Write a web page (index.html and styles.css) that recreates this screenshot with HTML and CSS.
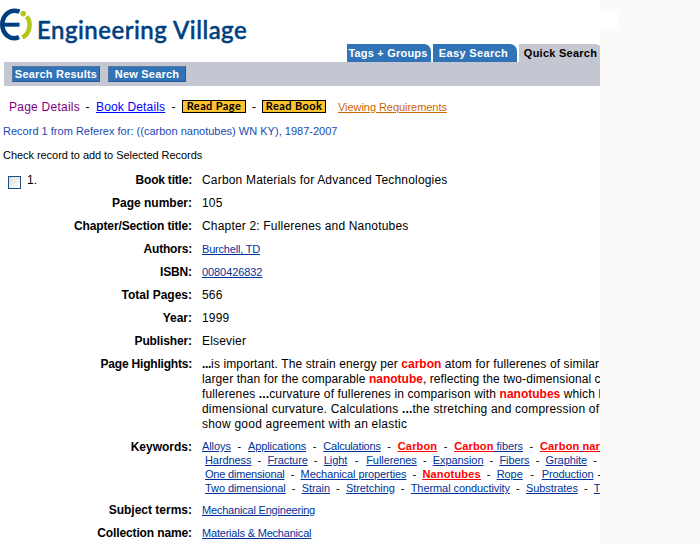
FILE: index.html
```html
<!DOCTYPE html>
<html lang="en">
<head>
<meta charset="utf-8">
<title>Engineering Village</title>
<link rel="stylesheet" href="styles.css">
</head>
<body>
<main class="page">
  <header class="header">
    <div class="brand">
      <svg class="mark" width="33" height="44" viewBox="0 0 33 44">
        <g fill="none">
          <path d="M19.500 11.700C9.500 8 2.300 16 2.300 24.500S9.500 41 19 37.200" stroke="#003f7f" stroke-width="4.600"/>
          <path d="M4 24.700h15.500" stroke="#003f7f" stroke-width="4"/>
          <path d="M26.500 16.500C31.500 22 30.500 33 22.500 37.500" stroke="#b4c61b" stroke-width="4.600"/>
        </g>
        <circle cx="23.200" cy="13.600" r="2.800" fill="#b4c61b"/>
      </svg>
      <span class="wordmark">Engineering Village</span>
    </div>
    <nav class="tabs">
      <a class="tab tags">Tags + Groups</a>
      <a class="tab easy">Easy Search</a>
      <a class="tab current">Quick Search</a>
    </nav>
  </header>
  <div class="bar"><a class="btn results">Search Results</a><a class="btn new">New Search</a></div>
  <div class="formats">
    <span class="here">Page Details</span><span class="dash">-</span><a class="book">Book Details</a><span class="dash">-</span><a class="read">Read Page</a><span class="dash last">-</span><a class="read">Read Book</a><a class="viewing">Viewing Requirements</a>
  </div>
  <p class="query">Record 1 from Referex for: ((carbon nanotubes) WN KY), 1987-2007</p>
  <p class="hint">Check record to add to Selected Records</p>
  <section class="record">
    <div class="pick"><i class="box"></i><span>1.</span></div>
    <dl class="fields">
      <dt class="narrow">Book title:</dt><dd>Carbon Materials for Advanced Technologies</dd>
      <dt>Page number:</dt><dd>105</dd>
      <dt class="tight">Chapter/Section title:</dt><dd>Chapter 2: Fullerenes and Nanotubes</dd>
      <dt class="narrow">Authors:</dt><dd><a class="snug">Burchell, TD</a></dd>
      <dt class="tight">ISBN:</dt><dd><a>0080426832</a></dd>
      <dt>Total Pages:</dt><dd>566</dd>
      <dt>Year:</dt><dd>1999</dd>
      <dt class="tight">Publisher:</dt><dd>Elsevier</dd>
      <dt class="narrow">Page Highlights:</dt>
      <dd class="highlights">
        <div class="h1"><b>...</b>is important. The strain energy per <em>carbon</em> atom for fullerenes of similar</div>
        <div class="h2">larger than for the comparable <em>nanotube</em>, reflecting the two-dimensional c</div>
        <div class="h3">fullerenes <b>...</b>curvature of fullerenes in comparison with <em>nanotubes</em> which h</div>
        <div class="h4">dimensional curvature. Calculations <b>...</b>the stretching and compression of</div>
        <div class="h5">show good agreement with an elastic</div>
      </dd>
      <dt>Keywords:</dt>
      <dd class="keywords">
        <div class="k1"><a>Alloys</a><i>-</i><a>Applications</a><i>-</i><a class="snug">Calculations</a><i>-</i><a><em>Carbon</em></a><i>-</i><a><em>Carbon</em> fibers</a><i>-</i><a><em>Carbon</em> <em>nar</em></a></div>
        <div class="k2"><a>Hardness</a><i>-</i><a>Fracture</a><i>-</i><a>Light</a><i class="wide">-</i><a>Fullerenes</a><i>-</i><a>Expansion</a><i>-</i><a>Fibers</a><i>-</i><a>Graphite</a><i>-</i></div>
        <div class="k3"><a class="snug">One dimensional</a><i>-</i><a>Mechanical properties</a><i>-</i><a><em>Nanotubes</em></a><i>-</i><a>Rope</a><i class="wide">-</i><a>Production</a><i class="end">-</i></div>
        <div class="k4"><a>Two dimensional</a><i>-</i><a>Strain</a><i>-</i><a>Stretching</a><i>-</i><a>Thermal conductivity</a><i>-</i><a>Substrates</a><i>-</i><a>T</a></div>
      </dd>
      <dt>Subject terms:</dt><dd><a class="snug">Mechanical Engineering</a></dd>
      <dt class="tight">Collection name:</dt><dd><a class="snug">Materials &amp; Mechanical</a></dd>
    </dl>
  </section>
</main>
<aside class="gutter"></aside>
</body>
</html>
```
FILE: styles.css
```css
* { box-sizing: border-box; }
body { margin: 0; width: 700px; height: 544px; overflow: hidden; display: flex; background: #fbfaf8; font: 12px/15px "Liberation Sans", Arial, sans-serif; color: #000; }
.page { width: 600px; height: 544px; overflow: hidden; background: #fff; flex: none; }
.gutter { width: 18px; height: 16px; margin-top: 12px; background: #fff; }
.header { height: 62px; display: flex; justify-content: space-between; align-items: flex-end; }
.brand { display: flex; align-self: flex-start; }
.mark { display: block; flex: none; }
.wordmark { margin: 15px 0 0 4px; font: 500 24px/30px Lato, sans-serif; letter-spacing: .5px; color: #003f7f; -webkit-text-stroke: .5px #003f7f; white-space: nowrap; }
.tabs { display: flex; gap: 2px; width: 253px; flex: none; }
.tab { height: 18px; flex: none; border-radius: 0 7px 0 0; background: #3173b7; color: #fff; font-weight: bold; font-size: 11px; line-height: 19px; text-align: center; letter-spacing: .35px; white-space: nowrap; }
.tags, .easy { width: 84px; }
.easy { padding-right: 3px; }
.tags { letter-spacing: .2px; padding-right: 2px; }
.current { width: 83px; background: #c4c7d1; color: #000; letter-spacing: .25px; }
.bar { height: 24px; margin-left: 4px; padding: 4px 8px; display: flex; gap: 8px; background: #c4c7d1; }
.btn { height: 16px; background: #3173b7; border: 1px solid; border-color: #579 #255a99 #255a99 #579; color: #fff; font-weight: bold; font-size: 11px; line-height: 14px; text-align: center; letter-spacing: .2px; white-space: nowrap; }
.results { width: 88px; }
.new { width: 78px; }
.formats { display: flex; align-items: center; height: 14px; margin: 14px 0 0 9px; white-space: nowrap; }
.here { color: #800080; width: 70px; letter-spacing: .25px; }
.dash { width: 17px; text-align: center; }
.last { width: 16px; }
.book { color: #00f; text-decoration: underline; width: 69px; letter-spacing: .15px; }
.read { width: 64px; height: 13px; align-self: flex-start; border: 1px solid #000; background: #fdc42f; font: bold 11px/9px Lato, sans-serif; letter-spacing: .4px; text-align: center; }
.viewing { margin-left: 12px; font-size: 11px; color: #cc6600; text-decoration: underline; letter-spacing: -.05px; }
.query { margin: 9px 0 0 3px; font-size: 11px; line-height: 16px; color: #1a49b0; letter-spacing: .01px; }
.hint { margin: 8px 0 0 3px; font-size: 11px; line-height: 16px; letter-spacing: -.05px; }
.record { display: flex; margin-top: 10px; }
.pick { width: 60px; display: flex; padding-left: 8px; flex: none; }
.box { width: 13px; height: 13px; margin: 3px 6px 0 0; border: 1px solid #1c5180; background: linear-gradient(135deg, #dcdcd7, #fff); }
.fields { margin: 0; display: grid; grid-template-columns: 132px 398px; column-gap: 10px; row-gap: 8px; flex: none; }
dt { font-weight: bold; text-align: right; white-space: nowrap; }
.narrow { letter-spacing: -.2px; }
.tight { letter-spacing: -.12px; }
dd { margin: 0; white-space: nowrap; letter-spacing: .18px; }
dd a { font-size: 11px; color: #039; text-decoration: underline; letter-spacing: -.08px; }
dd .snug { letter-spacing: -.2px; }
em { font-style: normal; font-weight: bold; color: red; letter-spacing: 0; }
.h1 { letter-spacing: .12px; }
.h1 b { letter-spacing: -.3px; }
.h2 { letter-spacing: .09px; }
.h3 { letter-spacing: .13px; }
.h4 { letter-spacing: .2px; }
.h5 { letter-spacing: .22px; }
.keywords { line-height: 14px; font-size: 11px; margin-top: -1px; }
.keywords div { display: flex; height: 14px; margin-left: 3px; }
.keywords i { font-style: normal; width: 16px; flex: none; text-align: center; }
.keywords .wide { width: 19px; }
.keywords .end { width: 12px; }
.keywords .k1 { margin-left: 0; }
.keywords .k1 i { width: 17px; }
.keywords em { letter-spacing: .15px; text-decoration: underline; }
```
